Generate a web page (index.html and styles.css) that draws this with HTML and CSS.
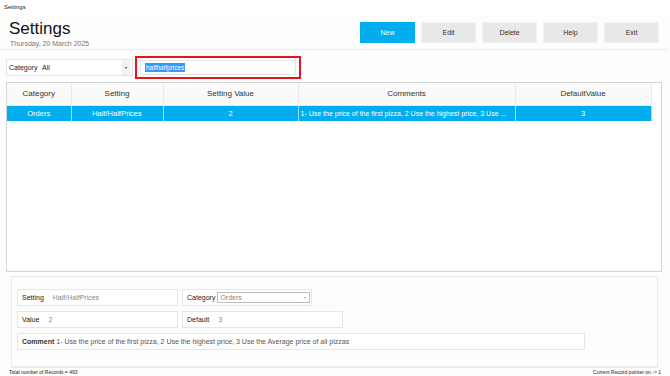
FILE: index.html
```html
<!DOCTYPE html>
<html lang="en">
<head>
    <meta charset="UTF-8">
    <meta name="viewport" content="width=device-width, initial-scale=1.0">
    <title>Settings</title>
    <link rel="stylesheet" href="styles.css">
</head>
<body>

<div class="titlebar">Settings</div>

<div class="top">
    <div class="heading">
        <h1>Settings</h1>
        <div class="date">Thursday, 20 March 2025</div>
    </div>
    <div class="actions">
        <button class="btn primary">New</button>
        <button class="btn">Edit</button>
        <button class="btn">Delete</button>
        <button class="btn">Help</button>
        <button class="btn">Exit</button>
    </div>
</div>

<div class="filters">
    <div class="combo">
        <span class="combo-label">Category</span>
        <span class="combo-value">All</span>
        <span class="combo-arrow">&#9662;</span>
    </div>
    <div class="search">
        <div class="search-input"><span class="selected">halfhalfprices</span></div>
    </div>
</div>

<div class="grid">
    <table>
        <thead>
            <tr>
                <th class="c1">Category</th>
                <th class="c2">Setting</th>
                <th class="c3">Setting Value</th>
                <th class="c4">Comments</th>
                <th class="c5">DefaultValue</th>
            </tr>
        </thead>
        <tbody>
            <tr class="active">
                <td>Orders</td>
                <td>Half/HalfPrices</td>
                <td>2</td>
                <td class="clip" title="1- Use the price of the first pizza, 2 Use the highest price, 3 Use the Average price of all pizzas">1- Use the price of the first pizza, 2 Use the highest price, 3 Use ...</td>
                <td>3</td>
            </tr>
        </tbody>
    </table>
</div>

<div class="details">
    <div class="row">
        <div class="field w161">
            <span class="label">Setting</span>
            <span class="value">Half/HalfPrices</span>
        </div>
        <div class="field w130">
            <span class="label">Category</span>
            <div class="select">
                <span>Orders</span>
                <span class="select-arrow">&#9662;</span>
            </div>
        </div>
    </div>
    <div class="row">
        <div class="field w161">
            <span class="label">Value</span>
            <span class="value">2</span>
        </div>
        <div class="field w161">
            <span class="label">Default</span>
            <span class="value">3</span>
        </div>
    </div>
    <div class="row">
        <div class="field w568">
            <span class="label">Comment</span>
            <span class="value dark">1- Use the price of the first pizza, 2 Use the highest price, 3 Use the Average price of all pizzas</span>
        </div>
    </div>
</div>

<div class="status">
    <span>Total number of Records = 493</span>
    <span>Current Record pointer on -&gt; 1</span>
</div>

</body>
</html>
```

FILE: styles.css
```css
body {
    font-family: "Liberation Sans", Arial, sans-serif;
    margin: 0;
    padding: 0;
    background-color: #fdfdfd;
    color: #222;
    width: 670px;
    height: 376px;
    overflow: hidden;
}
.titlebar {
    height: 14px;
    line-height: 14px;
    font-size: 6px;
    padding-left: 4px;
    background-color: #fff;
}
.top {
    display: flex;
    justify-content: space-between;
    height: 35px;
    padding: 0 8px 0 9px;
    border-bottom: 1px solid #ececec;
    margin: 0 3px 0 0;
}
.heading h1 {
    margin: 5px 0 0 0;
    font-size: 17px;
    font-weight: normal;
    line-height: 20px;
    color: #111;
}
.date {
    font-size: 7px;
    color: #777;
    margin-left: 1px;
    margin-top: 1px;
}
.actions {
    display: flex;
    gap: 6px;
    padding-top: 8px;
}
.btn {
    width: 55px;
    height: 21px;
    border: 1px solid #f2f2f2;
    background-color: #e8e8e8;
    font-family: inherit;
    font-size: 7px;
    color: #333;
    padding: 0;
}
.btn.primary {
    background-color: #00aeef;
    border-color: #00aeef;
    color: #fff;
}
.filters {
    display: flex;
    align-items: center;
    height: 24px;
    margin-top: 5px;
    padding-left: 6px;
}
.combo {
    display: flex;
    align-items: center;
    width: 121px;
    height: 15px;
    border: 1px solid #e4e4e4;
    background-color: #fff;
    font-size: 7px;
    padding-left: 2px;
    padding-right: 2px;
}
.combo-label {
    width: 33px;
}
.combo-value {
    flex: 1;
}
.combo-arrow {
    width: 8px;
    height: 15px;
    line-height: 15px;
    text-align: center;
    background-color: #f2f2f2;
    font-size: 4px;
    color: #333;
}
.search {
    margin-left: 2px;
    width: 162px;
    height: 19px;
    border: 2px solid #e3161e;
    display: flex;
    align-items: center;
    justify-content: center;
}
.search-input {
    width: 156px;
    height: 15px;
    border: 1px solid #e6e6e6;
    background-color: #fff;
    display: flex;
    align-items: center;
    font-size: 6.5px;
    padding-left: 4px;
    box-sizing: border-box;
}
.selected {
    background-color: #3399ff;
    color: #fff;
    padding: 0 1px;
    line-height: 9px;
}
.grid {
    margin: 3px 8px 0 6px;
    height: 188px;
    border: 1px solid #d4d4d4;
    background-color: #fff;
}
table {
    border-collapse: collapse;
    width: 644px;
    table-layout: fixed;
}
th, td {
    font-weight: normal;
    text-align: center;
    font-size: 8px;
    white-space: nowrap;
    overflow: hidden;
    padding: 0 2px;
    box-sizing: border-box;
}
th {
    height: 22px;
    color: #333;
    background-color: #fafafa;
    border-right: 1px solid #e8e8e8;
    border-bottom: 1px solid #e8e8e8;
}
.c1 { width: 64px; }
.c2 { width: 92px; }
.c3 { width: 135px; }
.c4 { width: 217px; }
.c5 { width: 136px; }
tr.active td {
    height: 16px;
    background-color: #00aeef;
    color: #fff;
    border-right: 1px solid #9fe0f8;
    font-size: 7.5px;
}
tr.active td.clip {
    text-align: left;
    padding-left: 2px;
    font-size: 7px;
}
.details {
    margin: 4px 12px 0 11px;
    height: 77px;
    border: 1px solid #eaeaea;
    border-bottom-width: 2px;
    background-color: #fdfdfd;
    padding: 12px 0 0 5px;
    display: flex;
    flex-direction: column;
    gap: 5px;
}
.row {
    display: flex;
    gap: 4px;
}
.field {
    display: flex;
    align-items: center;
    height: 17px;
    border: 1px solid #e6e6e6;
    background-color: #fff;
    font-size: 7px;
    box-sizing: border-box;
    padding-left: 4px;
}
.w161 { width: 161px; }
.w130 { width: 130px; }
.w568 { width: 568px; }
.label {
    color: #222;
    margin-right: 9px;
}
.w568 .label {
    margin-right: 2px;
    font-weight: bold;
    color: #333;
}
.value {
    color: #888;
}
.value.dark {
    color: #555;
}
.select {
    display: flex;
    align-items: center;
    justify-content: space-between;
    width: 93px;
    height: 11px;
    border: 1px solid #bdbdbd;
    color: #888;
    padding-left: 2px;
    box-sizing: border-box;
    margin-left: -7px;
}
.select-arrow {
    font-size: 4px;
    color: #aaa;
    width: 8px;
    text-align: center;
}
.status {
    display: flex;
    justify-content: space-between;
    font-size: 5px;
    line-height: 6px;
    padding: 1px 9px 0 9px;
    color: #222;
}
```
